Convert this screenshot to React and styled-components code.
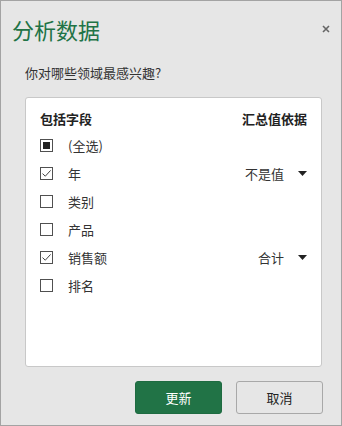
import React from "react";
import styled, { createGlobalStyle } from "styled-components";

const GlobalStyle = createGlobalStyle`
  html, body {
    margin: 0;
    padding: 0;
    background: #e6e6e6;
  }
  * {
    box-sizing: border-box;
  }
`;

const Dialog = styled.div`
  width: 342px;
  height: 426px;
  border: 1px solid #a3a3a3;
  background: #e6e6e6;
  display: flex;
  flex-direction: column;
  font-family: "Noto Sans CJK SC", "Noto Sans", sans-serif;
  color: #333;
`;

const TitleBar = styled.div`
  display: flex;
  justify-content: space-between;
  align-items: center;
  padding: 10px 10px 0 11px;
  height: 46px;
`;

const Title = styled.h1`
  margin: 0;
  font-size: 22px;
  font-weight: 400;
  color: #217346;
  line-height: 30px;
`;

const CloseButton = styled.button`
  border: none;
  background: none;
  padding: 0;
  width: 10px;
  height: 10px;
  display: flex;
  align-items: center;
  justify-content: center;
  cursor: pointer;
`;

const Body = styled.div`
  flex: 1;
  display: flex;
  flex-direction: column;
  padding: 17px 19px 11px 24px;
`;

const Question = styled.p`
  margin: 0 0 14px 0;
  font-size: 13px;
  line-height: 20px;
  color: #333;
`;

const Panel = styled.div`
  height: 270px;
  background: #fff;
  border: 1px solid #c8c8c8;
  border-radius: 3px;
  padding: 9px 14px 0 14px;
`;

const HeaderRow = styled.div`
  display: flex;
  justify-content: space-between;
  align-items: center;
  height: 22px;
  margin-bottom: 2px;
  font-size: 13px;
  font-weight: 700;
  color: #222;
`;

const Row = styled.div`
  display: flex;
  align-items: center;
  height: 28px;
  font-size: 13px;
  color: #333;
`;

const Box = styled.span`
  width: 13px;
  height: 13px;
  border: 1px solid #505050;
  background: #fff;
  display: flex;
  align-items: center;
  justify-content: center;
  flex-shrink: 0;
`;

const Fill = styled.span`
  width: 7px;
  height: 7px;
  background: #222;
`;

const Label = styled.span`
  margin-left: 15px;
  flex: 1;
`;

const Summary = styled.span`
  display: flex;
  align-items: center;
  gap: 14px;
  color: #333;
`;

const Footer = styled.div`
  display: flex;
  justify-content: flex-end;
  gap: 14px;
  margin-top: 14px;
  margin-right: -1px;
`;

const Button = styled.button`
  width: 87px;
  height: 33px;
  border-radius: 3px;
  font-family: inherit;
  font-size: 13px;
  cursor: pointer;
  border: 1px solid ${({ primary }) => (primary ? "#1e6b41" : "#a8a8a8")};
  background: ${({ primary }) => (primary ? "#217346" : "#e6e6e6")};
  color: ${({ primary }) => (primary ? "#fff" : "#222")};
`;

const CheckBox = ({ state }) => (
  <Box>
    {state === "mixed" && <Fill />}
    {state === "on" && (
      <svg width="11" height="11" viewBox="0 0 11 11">
        <path d="M1.5 5.6 L4.3 8.2 L9.6 2.4" fill="none" stroke="#444" strokeWidth="1" />
      </svg>
    )}
  </Box>
);

const Caret = () => (
  <svg width="9" height="5" viewBox="0 0 9 5">
    <path d="M0 0 H9 L4.5 5 Z" fill="#222" />
  </svg>
);

const fields = [
  { name: "(全选)", state: "mixed" },
  { name: "年", state: "on", summary: "不是值" },
  { name: "类别", state: "off" },
  { name: "产品", state: "off" },
  { name: "销售额", state: "on", summary: "合计" },
  { name: "排名", state: "off" },
];

export default function App() {
  return (
    <>
      <GlobalStyle />
      <Dialog>
        <TitleBar>
          <Title>分析数据</Title>
          <CloseButton aria-label="关闭">
            <svg width="8" height="8" viewBox="0 0 8 8">
              <path d="M1 1 L7 7 M7 1 L1 7" stroke="#666" strokeWidth="1.6" />
            </svg>
          </CloseButton>
        </TitleBar>
        <Body>
          <Question>你对哪些领域最感兴趣?</Question>
          <Panel>
            <HeaderRow>
              <span>包括字段</span>
              <span>汇总值依据</span>
            </HeaderRow>
            {fields.map((f) => (
              <Row key={f.name}>
                <CheckBox state={f.state} />
                <Label>{f.name}</Label>
                {f.summary && (
                  <Summary>
                    {f.summary}
                    <Caret />
                  </Summary>
                )}
              </Row>
            ))}
          </Panel>
          <Footer>
            <Button primary>更新</Button>
            <Button>取消</Button>
          </Footer>
        </Body>
      </Dialog>
    </>
  );
}
